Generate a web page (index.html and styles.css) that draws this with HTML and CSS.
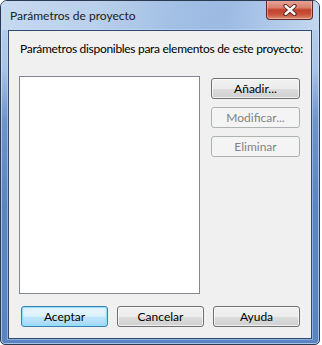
FILE: index.html
```html
<!DOCTYPE html>
<html lang="es">
<head>
<meta charset="utf-8">
<link rel="stylesheet" href="styles.css">
</head>
<body>
<div class="window">
  <div class="titlebar">
    <span class="title">Parámetros de proyecto</span>
    <div class="close">
      <svg width="16" height="12" viewBox="0 0 16 12">
        <path d="M3.5 2 L12.5 10 M12.5 2 L3.5 10" stroke="#4a1e18" stroke-width="4.2" stroke-linecap="round"/>
        <path d="M3.5 2 L12.5 10 M12.5 2 L3.5 10" stroke="#ffffff" stroke-width="2.4" stroke-linecap="round"/>
      </svg>
    </div>
  </div>
  <div class="client">
    <div class="label">Parámetros disponibles para elementos de este proyecto:</div>
    <div class="main">
      <div class="list"></div>
      <div class="side">
        <button class="btn">Añadir...</button>
        <button class="btn disabled">Modificar...</button>
        <button class="btn disabled">Eliminar</button>
      </div>
    </div>
    <div class="bottom">
      <button class="btn default">Aceptar</button>
      <button class="btn">Cancelar</button>
      <button class="btn">Ayuda</button>
    </div>
  </div>
</div>
</body>
</html>
```
FILE: styles.css
```css
html, body {
  margin: 0;
  padding: 0;
  background: #ffffff;
}
body {
  width: 322px;
  height: 345px;
  overflow: hidden;
  font-family: Lato, "Noto Sans", sans-serif;
  font-size: 12px;
}
.window {
  box-sizing: border-box;
  width: 320px;
  height: 345px;
  border: 1px solid #2a3a50;
  border-radius: 7px 7px 5px 5px;
  background: linear-gradient(to bottom, #bcd3ee 0%, #a9c3e6 20%, #6e94cc 35%, #5b84c2 60%, #5a83c2 100%);
  display: flex;
  flex-direction: column;
  box-shadow: inset 0 0 0 1px rgba(220,235,255,0.6);
  overflow: hidden;
}
.titlebar {
  height: 29px;
  display: flex;
  align-items: flex-start;
  padding-left: 9px;
  padding-right: 6px;
  background: linear-gradient(100deg, #c6daf0 0%, #bad0eb 30%, #a2bfe4 55%, #9cbae2 70%, #b5cdeb 90%, #c4d8ef 100%);
}
.title {
  margin-top: 7px;
  font-size: 12px;
  line-height: 16px;
  color: #202020;
  white-space: nowrap;
}
.close {
  margin-left: auto;
  width: 45px;
  height: 19px;
  margin-top: -1px;
  border: 1px solid #5c2a24;
  border-top: none;
  border-radius: 0 0 4px 4px;
  background: linear-gradient(#e7a89c 0%, #d9806d 40%, #c2432c 52%, #c8503a 75%, #dc8b74 100%);
  display: flex;
  align-items: center;
  justify-content: center;
  box-shadow: inset 0 0 0 1px rgba(255,220,210,0.45);
}
.client {
  flex: 1;
  margin: 0 7px 5px 7px;
  border: 1px solid #2f4a70;
  background: #f0f0f0;
  display: flex;
  flex-direction: column;
  padding: 10px 10px 0 10px;
  box-shadow: 0 0 0 1px rgba(200,220,245,0.5);
}
.label {
  line-height: 16px;
  color: #000;
  padding-left: 1px;
  white-space: nowrap;
  letter-spacing: -0.3px;
}
.main {
  display: flex;
  margin-top: 19px;
  align-items: flex-start;
}
.list {
  width: 179px;
  height: 216px;
  background: #ffffff;
  border: 1px solid #828790;
}
.side {
  margin-left: 11px;
  padding-top: 2px;
  display: flex;
  flex-direction: column;
  gap: 8px;
}
.btn {
  box-sizing: border-box;
  width: 89px;
  height: 21px;
  padding: 0;
  font-family: Lato, "Noto Sans", sans-serif;
  font-size: 12px;
  color: #000;
  border: 1px solid #707070;
  border-radius: 3px;
  background: linear-gradient(#f2f2f2 0%, #ebebeb 50%, #dddddd 51%, #cfcfcf 100%);
  box-shadow: inset 0 0 0 1px rgba(255,255,255,0.7);
  white-space: nowrap;
}
.btn.disabled {
  border-color: #adb2b5;
  background: #f4f4f4;
  color: #838383;
  box-shadow: none;
}
.btn.default {
  border-color: #3c7fb1;
  background: linear-gradient(#eaf6fd 0%, #d9f0fc 50%, #bee6fd 51%, #a7d9f5 100%);
  box-shadow: inset 0 0 0 1px #8ee0fb, inset 0 0 3px rgba(80,200,250,0.6);
}
.bottom {
  display: flex;
  gap: 9px;
  margin-top: 12px;
  padding-left: 2px;
}
.bottom .btn {
  width: 87px;
}
```
